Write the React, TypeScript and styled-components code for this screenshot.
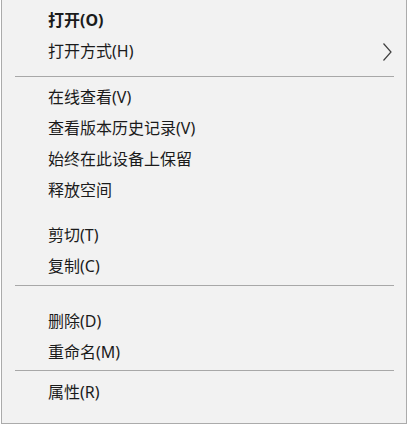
import React from "react";
import styled, { createGlobalStyle } from "styled-components";

const GlobalStyle = createGlobalStyle`
  html, body {
    margin: 0;
    padding: 0;
    background: #ffffff;
  }
`;

type Entry =
  | { kind: "item"; label: string; bold?: boolean; submenu?: boolean }
  | { kind: "separator"; top: number; bottom: number }
  | { kind: "gap"; height: number };

const entries: Entry[] = [
  { kind: "item", label: "打开(O)", bold: true },
  { kind: "item", label: "打开方式(H)", submenu: true },
  { kind: "separator", top: 9, bottom: 5 },
  { kind: "item", label: "在线查看(V)" },
  { kind: "item", label: "查看版本历史记录(V)" },
  { kind: "item", label: "始终在此设备上保留" },
  { kind: "item", label: "释放空间" },
  { kind: "gap", height: 14 },
  { kind: "item", label: "剪切(T)" },
  { kind: "item", label: "复制(C)" },
  { kind: "separator", top: 3, bottom: 20 },
  { kind: "item", label: "删除(D)" },
  { kind: "item", label: "重命名(M)" },
  { kind: "separator", top: 2, bottom: 6 },
  { kind: "item", label: "属性(R)" },
];

const Page = styled.div`
  padding-left: 1px;
`;

const Menu = styled.div`
  box-sizing: border-box;
  width: 406px;
  padding: 5px 0 15px;
  background: #f2f2f2;
  border: 1px solid #ababab;
  border-top: none;
  font-family: "Noto Sans", "Noto Sans CJK SC", sans-serif;
  font-size: 16px;
  color: #1b1b1b;
`;

const Item = styled.div`
  display: flex;
  align-items: center;
  height: 31px;
  padding: 0 14px 0 46px;
`;

const Label = styled.span<{ $bold?: boolean }>`
  flex: 1;
  line-height: 31px;
  white-space: nowrap;
  font-weight: ${(p) => (p.$bold ? 700 : 400)};
`;

const Arrow = styled.svg`
  flex: none;
  width: 10px;
  height: 20px;
  margin-right: 0;
`;

const Separator = styled.div<{ $top: number; $bottom: number }>`
  height: 1px;
  margin: ${(p) => `${p.$top}px 12px ${p.$bottom}px 13px`};
  background: #a8a8a8;
`;

const Gap = styled.div<{ $height: number }>`
  height: ${(p) => p.$height}px;
`;

const ChevronRight = () => (
  <Arrow viewBox="0 0 10 20">
    <polyline points="1.5,1.5 9,10 1.5,18.5" fill="none" stroke="#404040" strokeWidth="1.2" />
  </Arrow>
);

export default function App() {
  return (
    <>
      <GlobalStyle />
      <Page>
        <Menu>
          {entries.map((e, i) => {
            if (e.kind === "separator") return <Separator key={i} $top={e.top} $bottom={e.bottom} />;
            if (e.kind === "gap") return <Gap key={i} $height={e.height} />;
            return (
              <Item key={i}>
                <Label $bold={e.bold}>{e.label}</Label>
                {e.submenu && <ChevronRight />}
              </Item>
            );
          })}
        </Menu>
      </Page>
    </>
  );
}
